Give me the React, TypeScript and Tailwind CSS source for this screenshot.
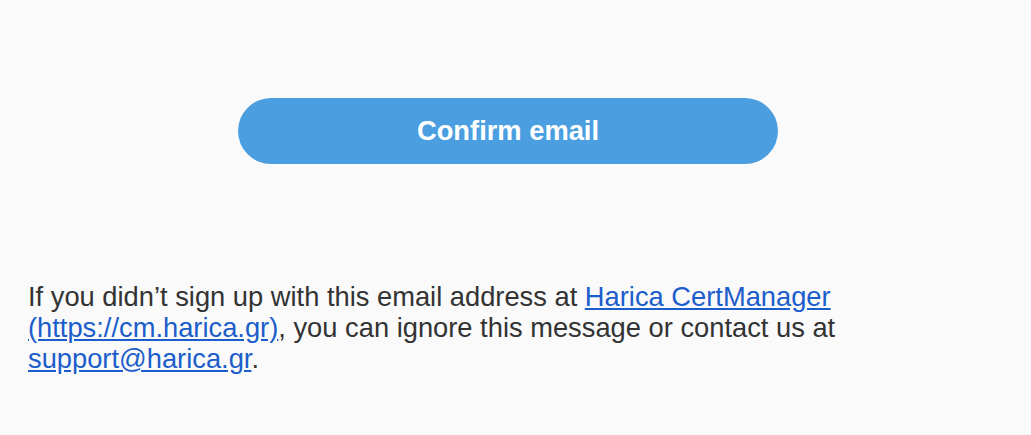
export default function App() {
  return (
    <div className="min-h-[435px] w-full bg-[#fafafa] font-['Liberation_Sans',Arial,sans-serif]">
      <div className="ml-[28px] w-[960px] pt-[98px]">
        <div className="flex justify-center">
          <a className="flex h-[66px] w-[540px] items-center justify-center rounded-full bg-[#4b9fe1] text-[27.3px] font-bold text-white">
            Confirm email
          </a>
        </div>
        <p className="mt-[117px] text-[27.3px] leading-[31px] text-[#333333]">
          If you didn’t sign up with this email address at{" "}
          <a className="text-[#1c5dcc] underline">Harica CertManager (https://cm.harica.gr)</a>, you can ignore this
          message or contact us at <a className="text-[#1c5dcc] underline">support@harica.gr</a>.
        </p>
      </div>
    </div>
  );
}
